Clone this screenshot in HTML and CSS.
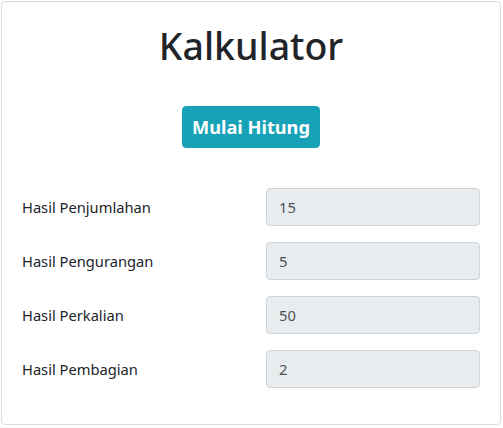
FILE: index.html
```html
<!DOCTYPE html>
<html lang="id">
<head>
<meta charset="utf-8">
<title>Kalkulator</title>
<link rel="stylesheet" href="styles.css">
</head>
<body>
<div class="card">
  <div class="card-body">
    <h1 class="title">Kalkulator</h1>
    <div class="actions">
      <button class="btn" type="button">Mulai Hitung</button>
    </div>
    <div class="form">
      <div class="form-row">
        <label class="label">Hasil Penjumlahan</label>
        <input class="input" type="text" value="15" readonly>
      </div>
      <div class="form-row">
        <label class="label">Hasil Pengurangan</label>
        <input class="input" type="text" value="5" readonly>
      </div>
      <div class="form-row">
        <label class="label">Hasil Perkalian</label>
        <input class="input" type="text" value="50" readonly>
      </div>
      <div class="form-row">
        <label class="label">Hasil Pembagian</label>
        <input class="input" type="text" value="2" readonly>
      </div>
    </div>
  </div>
</div>
</body>
</html>
```

FILE: styles.css
```css
* { box-sizing: border-box; }
html, body { margin: 0; padding: 0; background: #fff; }
body {
  font-family: "Noto Sans", "Open Sans", sans-serif;
  color: #212529;
  font-size: 15px;
  line-height: 1.5;
  padding: 1px;
}
.card {
  width: 500px;
  height: 424px;
  border: 1px solid #dcdcdc;
  border-radius: 4px;
  background: #fff;
}
.card-body {
  padding: 20px;
}
.title {
  margin: 0 0 36px;
  font-size: 37.5px;
  font-weight: 500;
  line-height: 48px;
  text-align: center;
  color: #212529;
}
.actions {
  display: flex;
  justify-content: center;
  margin-bottom: 40px;
}
.btn {
  font-family: inherit;
  font-size: 18.2px;
  font-weight: 700;
  line-height: 28px;
  padding: 6px 8px;
  height: 42px;
  width: 138px;
  white-space: nowrap;
  color: #fff;
  background: #17a2b8;
  border: 1px solid #17a2b8;
  border-radius: 4px;
}
.form { display: flex; flex-direction: column; gap: 16px; }
.form-row {
  display: grid;
  grid-template-columns: 1fr 1fr;
  column-gap: 30px;
  align-items: center;
}
.label { font-size: 14.7px; }
.input {
  font-family: inherit;
  font-size: 14.7px;
  height: 38px;
  padding: 6px 12px;
  color: #495057;
  background: #e9ecef;
  border: 1px solid #ced4da;
  border-radius: 4px;
  width: 100%;
}
```
